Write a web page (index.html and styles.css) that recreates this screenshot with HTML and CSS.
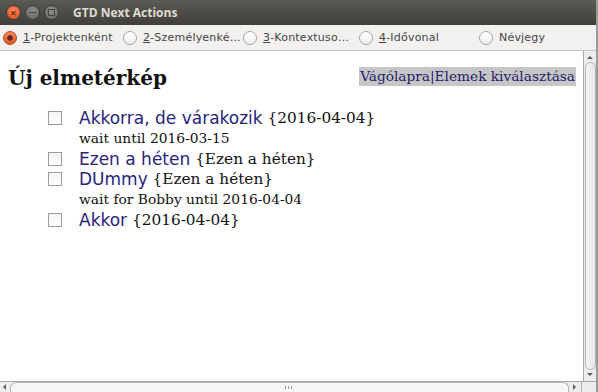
FILE: index.html
```html
<!DOCTYPE html>
<html>
	<head>
		<title>GTD Next Actions</title>
<link rel="stylesheet" href="styles.css">
	</head>
	<body>
		<div class="window">
			<div class="titlebar">
				<span class="wbtn close">&times;</span>
				<span class="wbtn min"></span>
				<span class="wbtn max"></span>
				<span class="title">GTD Next Actions</span>
			</div>
			<div class="tabs">
				<div class="tab w1"><span class="radio on"></span><span><u>1</u>-Projektenként</span></div>
				<div class="tab w1"><span class="radio"></span><span><u>2</u>-Személyenké…</span></div>
				<div class="tab w2"><span class="radio"></span><span><u>3</u>-Kontextuso…</span></div>
				<div class="tab w1"><span class="radio"></span><span><u>4</u>-Idővonal</span></div>
				<div class="tab"><span class="radio"></span><span>Névjegy</span></div>
			</div>
			<div class="main">
				<div class="content">
					<div class="header">
						<h2>Új elmetérkép</h2>
						<div class="links"><a href="#">Vágólapra</a>|<a href="#">Elemek kiválasztása</a></div>
					</div>
					<ul class="items">
						<li class="item"><span class="check"></span><a href="#">Akkorra, de várakozik</a>&nbsp;<span class="ctx">{2016-04-04}</span></li>
						<li class="note">wait until 2016-03-15</li>
						<li class="item"><span class="check"></span><a href="#">Ezen a héten</a>&nbsp;<span class="ctx">{Ezen a héten}</span></li>
						<li class="item"><span class="check"></span><a href="#">DUmmy</a>&nbsp;<span class="ctx">{Ezen a héten}</span></li>
						<li class="note">wait for Bobby until 2016-04-04</li>
						<li class="item"><span class="check"></span><a href="#">Akkor</a>&nbsp;<span class="ctx">{2016-04-04}</span></li>
					</ul>
				</div>
				<div class="vscroll">
					<span class="arrow up"></span>
					<span class="vthumb"></span>
					<span class="arrow down"></span>
				</div>
			</div>
			<div class="hscroll">
				<span class="harrow left"></span>
				<span class="hthumb"><span class="grip"></span></span>
				<span class="harrow right"></span>
				<span class="corner"></span>
			</div>
		</div>
	</body>
</html>
```

FILE: styles.css
```css
body {
	margin: 0;
	background: #ffffff;
	overflow: hidden;
}

.window {
	width: 598px;
	height: 392px;
	display: flex;
	flex-direction: column;
	box-sizing: border-box;
	border-right: 2px solid #9a9a9a;
}

/* title bar */
.titlebar {
	height: 25px;
	flex: none;
	display: flex;
	align-items: center;
	padding-left: 6px;
	background: linear-gradient(#5c5a54, #403f3a);
	font-family: "Open Sans", sans-serif;
}
.wbtn {
	width: 15px;
	height: 15px;
	border-radius: 50%;
	margin-right: 4px;
	box-sizing: border-box;
	border: 1px solid #3a3935;
	background: radial-gradient(circle at 50% 35%, #8c8b86, #66655f);
	display: flex;
	align-items: center;
	justify-content: center;
	font-size: 11px;
	line-height: 1;
	color: #4c4b47;
}
.wbtn.close {
	background: radial-gradient(circle at 50% 35%, #f5865f, #df4b16);
	color: #7a2a10;
	font-weight: bold;
}
.wbtn.min::after {
	content: "";
	width: 7px;
	height: 1px;
	background: #45443f;
}
.wbtn.max::after {
	content: "";
	width: 5px;
	height: 5px;
	border: 1px solid #45443f;
}
.title {
	margin-left: 10px;
	font-size: 12px;
	font-weight: bold;
	color: #dfdbd2;
}

/* radio tabs */
.tabs {
	height: 26px;
	flex: none;
	display: flex;
	align-items: center;
	padding-left: 3px;
	background: #f2f1f0;
	border-bottom: 1px solid #c8c6c3;
	box-sizing: border-box;
	font-family: "DejaVu Sans", sans-serif;
	font-size: 11px;
	letter-spacing: 0.2px;
	color: #444444;
}
.tab {
	display: flex;
	align-items: center;
	gap: 6px;
	white-space: nowrap;
}
.tab.w1 { width: 120px; }
.tab.w2 { width: 116px; }
.radio {
	width: 14px;
	height: 14px;
	flex: none;
	box-sizing: border-box;
	border-radius: 50%;
	border: 1px solid #a5a29e;
	background: linear-gradient(#ffffff, #f0efee);
	display: flex;
	align-items: center;
	justify-content: center;
}
.radio.on {
	border-color: #c8461c;
	background: linear-gradient(#f08a5e, #dd5222);
}
.radio.on::after {
	content: "";
	width: 6px;
	height: 6px;
	border-radius: 50%;
	background: #7a2410;
	box-shadow: 0 0 1px #fff;
}

/* main area */
.main {
	flex: 1;
	display: flex;
	min-height: 0;
}
.content {
	flex: 1;
	padding: 0 7px 0 8px;
	font-family: "DejaVu Serif", serif;
}
.header {
	display: flex;
	justify-content: space-between;
	align-items: flex-start;
	margin-top: 15px;
}
h2 {
	margin: 0;
	font-size: 20px;
	line-height: 24px;
	font-weight: bold;
	color: #111111;
}
.links {
	margin-top: 1px;
	background: #c6c6c6;
	font-size: 13.7px;
	line-height: 19px;
	padding: 0 1px;
	color: #1a1a6e;
	white-space: nowrap;
}
.links a { color: #1f1a6b; text-decoration: none; }

.items {
	list-style: none;
	margin: 18px 0 0 0;
	padding: 0 0 0 40px;
}
.item {
	display: flex;
	align-items: center;
	height: 20px;
	font-size: 15.3px;
	color: #111111;
	white-space: nowrap;
}
.item a {
	font-family: "DejaVu Sans", sans-serif;
	font-size: 17px;
	color: #29247a;
	text-decoration: none;
}
.check {
	width: 14px;
	height: 14px;
	flex: none;
	box-sizing: border-box;
	border: 1px solid #9c9c9c;
	background: linear-gradient(#f4f4f4, #ffffff);
	margin-right: 17px;
}
.note {
	padding-left: 31px;
	height: 21px;
	line-height: 21px;
	font-size: 13.8px;
	color: #111111;
}

/* scrollbars */
.vscroll {
	width: 13px;
	flex: none;
	border-left: 1px solid #a8a8a8;
	background: #ededed;
	display: flex;
	flex-direction: column;
	align-items: center;
	padding: 3px 0;
	box-sizing: border-box;
}
.arrow {
	width: 0;
	height: 0;
	border-left: 3px solid transparent;
	border-right: 3px solid transparent;
	flex: none;
}
.arrow.up { border-bottom: 3px solid #606060; margin: 2px 0 3px; }
.arrow.down { border-top: 3px solid #606060; margin: 3px 0 2px; }
.vthumb {
	flex: 1;
	width: 11px;
	box-sizing: border-box;
	border: 1px solid #b4b4b4;
	border-radius: 6px;
	background: linear-gradient(90deg, #f6f6f6, #e6e6e6);
}
.hscroll {
	height: 11px;
	flex: none;
	display: flex;
	align-items: center;
	border-top: 1px solid #a8a8a8;
	background: #ededed;
	box-sizing: border-box;
}
.harrow {
	width: 0;
	height: 0;
	border-top: 3px solid transparent;
	border-bottom: 3px solid transparent;
	flex: none;
}
.harrow.left { border-right: 3px solid #606060; margin: 0 4px 0 3px; }
.harrow.right { border-left: 3px solid #606060; margin: 0 5px 0 4px; }
.hthumb {
	flex: 1;
	height: 10px;
	box-sizing: border-box;
	border: 1px solid #b4b4b4;
	border-bottom: none;
	border-radius: 6px 6px 0 0;
	background: #f6f6f6;
	display: flex;
	justify-content: center;
	align-items: center;
}
.grip {
	width: 9px;
	height: 3px;
	background: repeating-linear-gradient(90deg, #9a9a9a 0 1px, transparent 1px 3px);
}
.corner {
	width: 14px;
	height: 10px;
	flex: none;
	border-left: 1px solid #b4b4b4;
	background: #ededed;
}
```
